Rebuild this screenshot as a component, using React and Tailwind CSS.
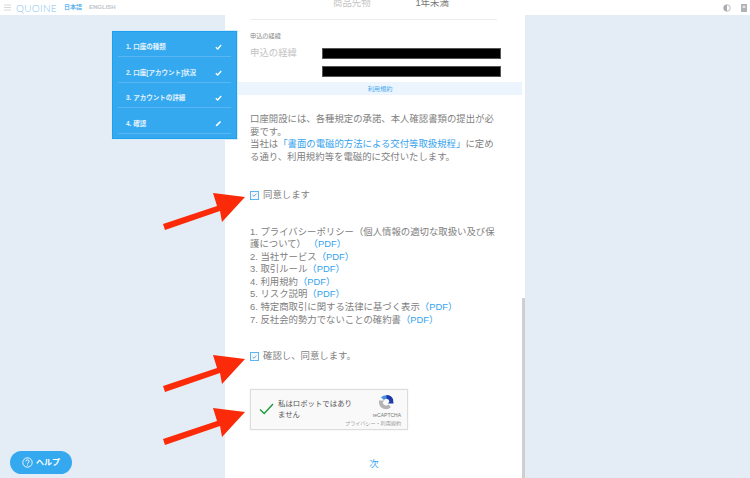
const STEPS = [
  { id: 1, title: '1. 口座の種類' },
  { id: 2, title: '2. 口座[アカウント]状況' },
  { id: 3, title: '3. アカウントの詳細' },
  { id: 4, title: '4. 確認', editing: true }
]

const DOCS = [
  { text: '2. 当社サービス' },
  { text: '3. 取引ルール' },
  { text: '4. 利用規約' },
  { text: '5. リスク説明' },
  { text: '6. 特定商取引に関する法律に基づく表示' },
  { text: '7. 反社会的勢力でないことの確約書' }
]

const Arrow = ({ className }) => (
  <svg className={`absolute z-20 ${className}`} width="85" height="42" viewBox="0 0 85 42">
    <polygon points="83,7 51,3 55,16 1,34 3,40 58,21 60,32" fill="#fb2a08" />
  </svg>
)

const Checkbox = () => (
  <span className="flex h-[9px] w-[9px] shrink-0 items-center justify-center border border-[#5db5f2] bg-[#f4f8fb]">
    <svg width="5" height="4" viewBox="0 0 5 4">
      <path d="M0.6 2.2 L1.9 3.2 L4.4 0.8" fill="none" stroke="#4a90c8" strokeWidth="0.8" />
    </svg>
  </span>
)

const Pdf = () => <span className="text-[#35a3ee]">（PDF）</span>

const Sidebar = () => (
  <div className="relative z-10 ml-[112px] mt-4 h-[108px] w-[125px] shrink-0 border border-[#1ea0f0] bg-[#35a9f0] px-[5px] outline outline-1 outline-[#d9ebf8]">
    {STEPS.map(step => (
      <div key={step.id} className="flex h-[25.4px] items-end justify-between border-b border-[#58b7f2] pb-[5px] pl-[8px] pr-[9px] text-[6.5px] font-bold leading-[9px] text-[#e3f3fd]">
        <span>{step.title}</span>
        {step.editing ? (
          <svg className="mb-[1px]" width="7" height="7" viewBox="0 0 7 7">
            <path d="M0.8 6.2 L1 4.8 L5 0.9 L6.1 2 L2.2 6 Z" fill="#fff" />
          </svg>
        ) : (
          <svg className="mb-[1px]" width="7" height="6" viewBox="0 0 7 6">
            <path d="M0.8 3.2 L2.7 5 L6.2 1" fill="none" stroke="#fff" strokeWidth="1.3" />
          </svg>
        )}
      </div>
    ))}
  </div>
)

const Header = () => (
  <header className="flex h-[15px] items-center bg-white pl-[4px] pr-[3px]">
    <svg width="7" height="7" viewBox="0 0 7 7">
      <path d="M0 1 H7 M0 3.5 H7 M0 6 H7" stroke="#c4c8cc" strokeWidth="0.7" />
    </svg>
    <span className="ml-[5px] w-[48px] font-['Lato',sans-serif] text-[10px] font-light leading-none tracking-[0.3px] text-[#7fc2f1]">QUOINE</span>
    <span className="text-[6px] font-bold text-[#5fb4ee]">日本語</span>
    <span className="ml-[7px] text-[6px] font-bold text-[#c0c4c8]">ENGLISH</span>
    <svg className="ml-auto" width="8" height="8" viewBox="0 0 8 8">
      <circle cx="4" cy="4" r="3.3" fill="#fff" stroke="#a9adb1" strokeWidth="0.8" />
      <path d="M4 0.7 A3.3 3.3 0 0 0 4 7.3 Z" fill="#a9adb1" />
    </svg>
    <svg className="ml-[10px]" width="6" height="8" viewBox="0 0 6 8">
      <rect width="6" height="8" rx="0.6" fill="#b0b3b6" />
      <rect x="1.5" y="1.8" width="3" height="2" fill="#e8e9ea" />
    </svg>
  </header>
)

const Recaptcha = () => (
  <div className="flex h-[41px] w-[158px] border border-[#dcdcdc] bg-[#f9f9f9] shadow-[0_0_2px_rgba(0,0,0,0.08)]">
    <svg className="ml-[8px] mt-[13px] shrink-0" width="15" height="12" viewBox="0 0 15 12">
      <path d="M1 6.5 L5.2 10.5 L14 1" fill="none" stroke="#1e9a3c" strokeWidth="1.4" />
    </svg>
    <p className="ml-[4px] mt-[8px] w-[76px] shrink-0 text-[7.4px] leading-[11px] text-[#555]">私はロボットではありません</p>
    <div className="ml-auto flex w-[40px] flex-col items-end pr-[6px] pt-[4px]">
      <svg className="mr-[7px] shrink-0" width="16" height="17" viewBox="0 0 16 17">
        <path d="M1 9 A7 7 0 0 0 13 13 L10.5 10.5 A3.6 3.6 0 0 1 4.6 8.5 L6.5 6.5 L1 6.5 Z" fill="#b4b4b4" />
        <path d="M3 3.5 A7 7 0 0 1 9 1.2 L9 4.8 A3.6 3.6 0 0 0 6 6 Z" fill="#4a90e2" />
        <path d="M8.5 1 A7 7 0 0 1 15 5 L15.5 9.5 L10 9.5 L11.5 7.5 A3.6 3.6 0 0 0 8.5 4.8 Z" fill="#1c3aa9" />
      </svg>
      <span className="mt-[2px] text-[5px] leading-none text-[#777]">reCAPTCHA</span>
      <span className="mt-[3px] whitespace-nowrap text-[5.1px] leading-none text-[#999]">プライバシー・利用規約</span>
    </div>
  </div>
)

const App = () => {
  return (
    <div className="relative h-[478px] w-[750px] overflow-hidden bg-white font-['Liberation_Sans','Noto_Sans_CJK_JP',sans-serif]">
      <Header />
      <div className="flex h-[463px] bg-[#e4edf5]">
        <div className="w-[225px] shrink-0">
          <Sidebar />
        </div>

        <main className="relative z-[5] -mt-[15px] h-[478px] w-[300px] shrink-0 overflow-hidden bg-white text-[9.4px] leading-[12.5px] text-[#808080]">
          <div className="absolute right-0 top-[298px] h-[180px] w-[3px] bg-[#cfcfcf]" />

          <div className="ml-[25px] flex h-[20px] w-[247px] items-start border-b border-[#ececec] text-[9.4px] leading-[6px]">
            <span className="ml-[83px] text-[#c4c4c4]">商品先物</span>
            <span className="ml-[45px] text-[#777]">1年未満</span>
          </div>

          <div className="ml-[25px] mt-[11px] text-[6.2px] leading-[9px] text-[#888]">申込の経緯</div>
          <div className="ml-[25px] mt-[8px] flex items-start">
            <span className="mt-[-1px] w-[72px] text-[9.4px] text-[#c2c2c2]">申込の経緯</span>
            <div className="flex flex-col gap-[7px]">
              <div className="h-[11px] w-[179px] border border-[#555] bg-black" />
              <div className="h-[11px] w-[179px] border border-[#555] bg-black" />
            </div>
          </div>

          <div className="ml-[13px] mr-[3px] mt-[5px] h-[13px] bg-[#ecf5fd] text-center text-[6.2px] leading-[13px] text-[#4aaaef]">利用規約</div>

          <div className="ml-[25px] mr-[28px] mt-[18px]">
            <p>口座開設には、各種規定の承諾、本人確認書類の提出が必要です。</p>
            <p>当社は<span className="text-[#35a3ee]">「書面の電磁的方法による交付等取扱規程」</span>に定める通り、利用規約等を電磁的に交付いたします。</p>
          </div>

          <label className="ml-[25px] mt-[26px] flex items-center gap-[4px]">
            <Checkbox />
            <span>同意します</span>
          </label>

          <div className="ml-[25px] mr-[28px] mt-[24px] leading-[12.6px]">
            <p>1. プライバシーポリシー（個人情報の適切な取扱い及び保護について） <Pdf /></p>
            {DOCS.map(doc => (
              <p key={doc.text}>{doc.text}<Pdf /></p>
            ))}
          </div>

          <label className="ml-[25px] mt-[24px] flex items-center gap-[4px]">
            <Checkbox />
            <span>確認し、同意します。</span>
          </label>

          <div className="ml-[25px] mt-[26px]">
            <Recaptcha />
          </div>

          <div className="mt-[28px] pr-[2px] text-center text-[9.4px] text-[#35a3ee]">次</div>
        </main>
      </div>

      <Arrow className="left-[162px] top-[190px]" />
      <Arrow className="left-[162px] top-[352px]" />
      <Arrow className="left-[162px] top-[405px]" />

      <button className="absolute bottom-[4px] left-[10px] z-20 flex h-[23px] w-[62px] items-center justify-center gap-[3px] rounded-full bg-[#35a9f0] text-[8px] font-bold text-white">
        <svg width="11" height="11" viewBox="0 0 11 11">
          <circle cx="5.5" cy="5.5" r="4.7" fill="none" stroke="#fff" strokeWidth="0.9" />
          <path d="M3.9 4.4 A1.6 1.6 0 1 1 5.9 5.9 Q5.5 6.1 5.5 6.8" fill="none" stroke="#fff" strokeWidth="0.9" />
          <circle cx="5.5" cy="8.1" r="0.6" fill="#fff" />
        </svg>
        ヘルプ
      </button>
    </div>
  )
}

export default App
